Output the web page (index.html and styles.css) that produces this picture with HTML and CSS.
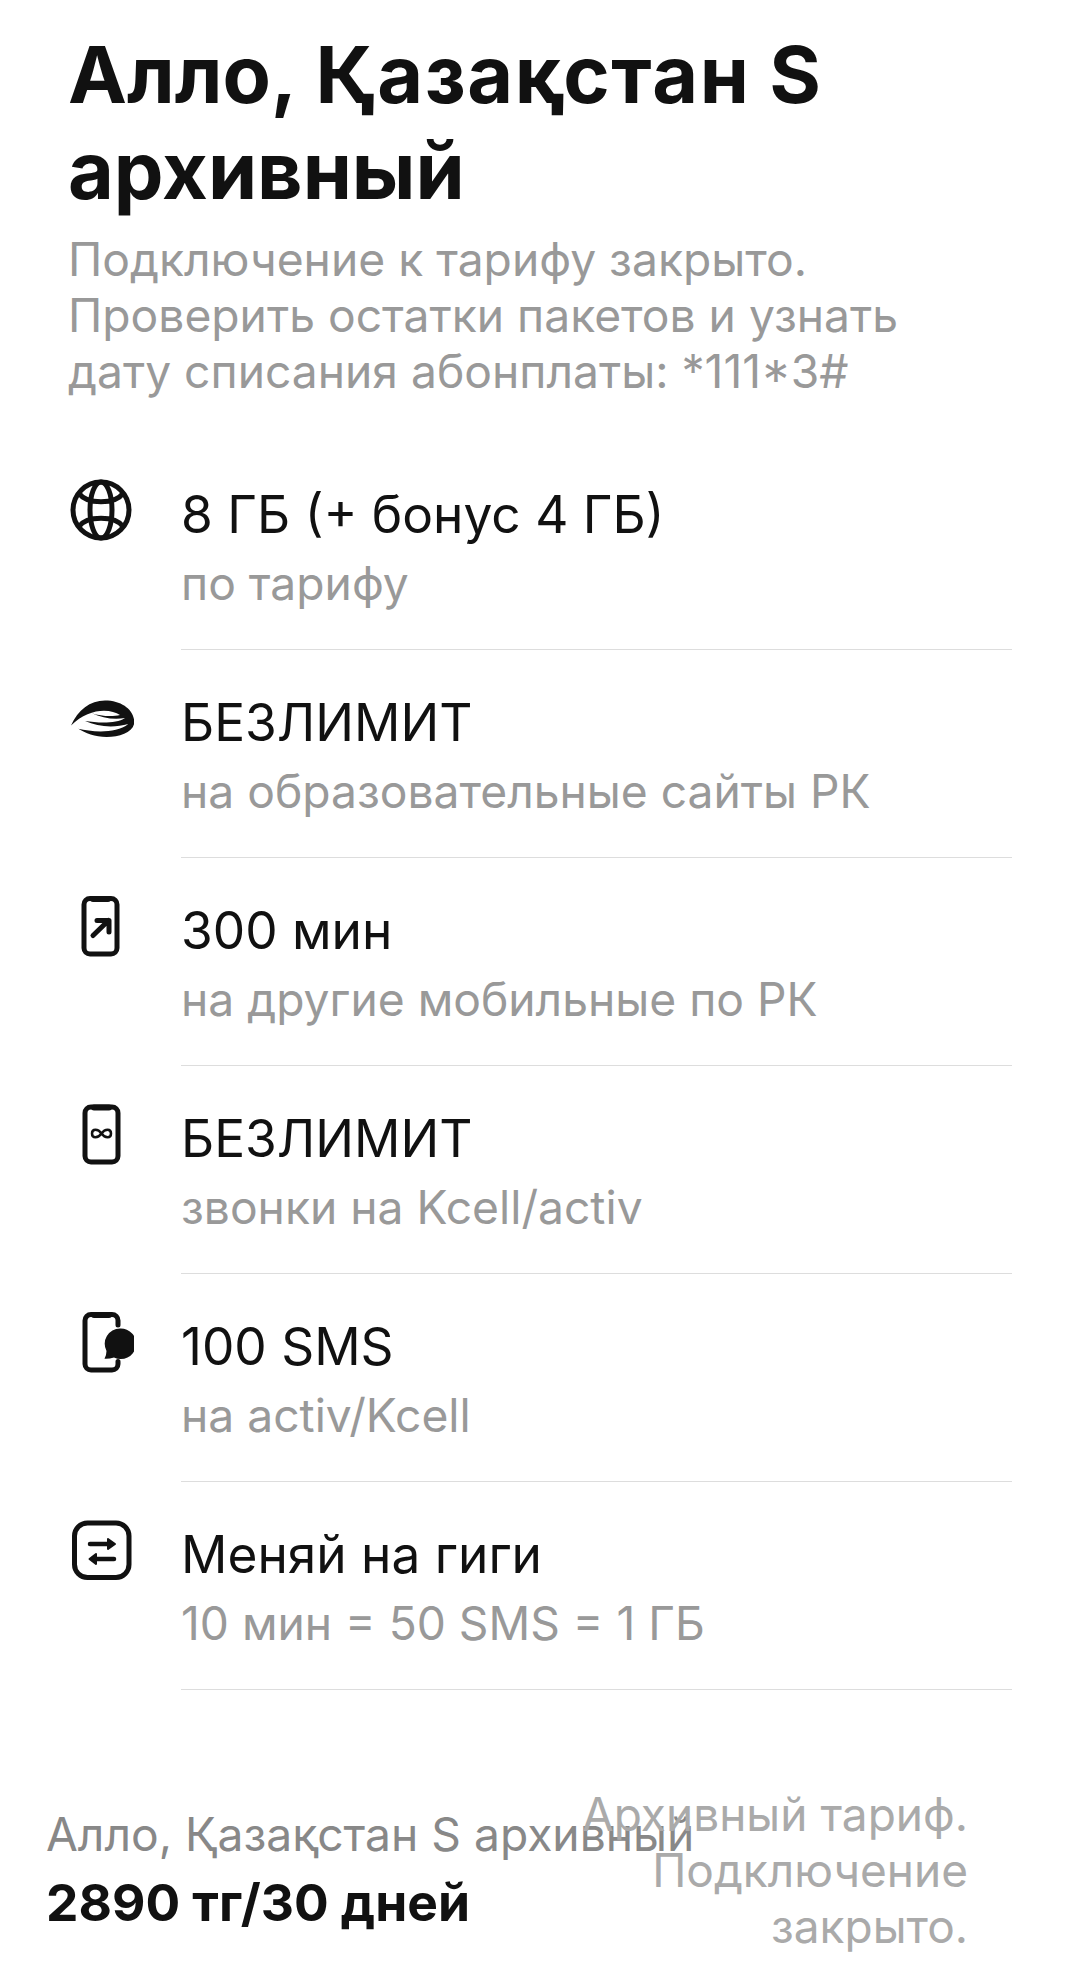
FILE: index.html
```html
<!DOCTYPE html>
<html lang="ru">
<head>
    <meta charset="UTF-8">
    <meta name="viewport" content="width=device-width, initial-scale=1.0">
    <title>Алло, Қазақстан S архивный</title>
    <link rel="stylesheet" href="styles.css">
</head>
<body>
    <div class="page">
        <h1 class="title">Алло, <span class="wide">Қазақстан</span> S<br>архивный</h1>
        <p class="subtitle">Подключение к тарифу закрыто.<br>Проверить остатки пакетов и узнать<br>дату списания абонплаты: *111*3#</p>

        <div class="list">
            <div class="item">
                <div class="icon">
                    <svg width="64" height="64" viewBox="0 0 64 64" fill="none" stroke="#111" stroke-width="5">
                        <circle cx="31" cy="32" r="28"/>
                        <ellipse cx="31" cy="32" rx="11" ry="28"/>
                        <path d="M9 15.500 C17 26.500 45 26.500 53 15.500"/>
                        <path d="M9 48.500 C17 37.500 45 37.500 53 48.500"/>
                    </svg>
                </div>
                <div class="text">
                    <div class="name">8 ГБ (+ бонус 4 ГБ)</div>
                    <div class="desc">по тарифу</div>
                </div>
            </div>
            <div class="item">
                <div class="icon">
                    <svg width="64" height="64" viewBox="0 0 64 64" fill="#111">
                        <path d="M1 39.500 C8 24 20 14.500 35 14.500 C52 14.500 64 24 64.300 36 C64 46 50 51 36.700 51 C25 51 15 47 8.300 42.800 C22 46 46 48 58.300 38 C44 42 28 41 15 35 C28 37 46 38 55 32 C44 34 32 32 21.700 27.200 C30 30 42 31 50 29 C40 22 18 22 1 39.500 Z"/>
                    </svg>
                </div>
                <div class="text">
                    <div class="name">БЕЗЛИМИТ</div>
                    <div class="desc">на образовательные сайты РК</div>
                </div>
            </div>
            <div class="item">
                <div class="icon">
                    <svg width="64" height="64" viewBox="0 0 64 64" fill="none" stroke="#111" stroke-width="5" stroke-linecap="round" stroke-linejoin="round">
                        <rect x="14" y="4.500" width="33" height="55.500" rx="6"/>
                        <path d="M23 5 H38" stroke-width="6"/>
                        <path d="M23 41.500 L38.500 26.500 M27 26.500 H39 V38"/>
                    </svg>
                </div>
                <div class="text">
                    <div class="name">300 мин</div>
                    <div class="desc">на другие мобильные по РК</div>
                </div>
            </div>
            <div class="item">
                <div class="icon">
                    <svg width="64" height="64" viewBox="0 0 64 64" fill="none" stroke="#111" stroke-width="5" stroke-linejoin="round">
                        <rect x="15" y="5" width="33" height="55" rx="6"/>
                        <path d="M24 5.500 H39" stroke-width="6" stroke-linecap="round"/>
                        <path d="M31.500 31.500 C28 26.500 22 26.500 22 31.500 C22 36.500 28 36.500 31.500 31.500 C35 26.500 41 26.500 41 31.500 C41 36.500 35 36.500 31.500 31.500 Z" stroke-width="2.500"/>
                    </svg>
                </div>
                <div class="text">
                    <div class="name">БЕЗЛИМИТ</div>
                    <div class="desc">звонки на Kcell/activ</div>
                </div>
            </div>
            <div class="item">
                <div class="icon">
                    <svg width="64" height="64" viewBox="0 0 64 64" fill="none" stroke="#111" stroke-width="5" stroke-linecap="round">
                        <path d="M48 15 V10.500 A6 6 0 0 0 42 4.500 H21 A6 6 0 0 0 15 10.500 V54 A6 6 0 0 0 21 60 H42 A6 6 0 0 0 48 54 V51.500"/>
                        <path d="M24 5 H39" stroke-width="6"/>
                        <path d="M50 18.500 A15.300 15.300 0 1 1 44 47.500 Q39 49 34.500 48.700 Q36.500 45 36.500 41 A15.300 15.300 0 0 1 50 18.500 Z" fill="#111" stroke="none"/>
                    </svg>
                </div>
                <div class="text">
                    <div class="name">100 SMS</div>
                    <div class="desc">на activ/Kcell</div>
                </div>
            </div>
            <div class="item">
                <div class="icon">
                    <svg width="64" height="64" viewBox="0 0 64 64" fill="none" stroke="#111" stroke-width="5" stroke-linecap="round">
                        <rect x="4.500" y="5" width="54.500" height="54.500" rx="13"/>
                        <path d="M20 26 H38" stroke-width="4.500"/>
                        <path d="M38 21 L45 26 L38 31 Z" fill="#111" stroke-width="2" stroke-linejoin="round"/>
                        <path d="M26 41 H44" stroke-width="4.500"/>
                        <path d="M26 36 L19.500 41 L26 46 Z" fill="#111" stroke-width="2" stroke-linejoin="round"/>
                    </svg>
                </div>
                <div class="text">
                    <div class="name">Меняй на гиги</div>
                    <div class="desc">10 мин = 50 SMS = 1 ГБ</div>
                </div>
            </div>
        </div>

        <div class="footer">
            <div class="price">
                <div class="price-name">Алло, Қазақстан S архивный</div>
                <div class="price-value">2890 тг/30 дней</div>
            </div>
            <div class="closed">Архивный тариф. Подключение закрыто.</div>
        </div>
    </div>
</body>
</html>
```

FILE: styles.css
```css
body {
 margin: 0;
 background-color: #fff;
 font-family: Inter, "Liberation Sans", sans-serif;
 color: #111;
}

.page {
 height: 1969px;
 overflow: hidden;
 position: relative;
}

.title {
 margin: 26px 0 0 68px;
 font-size: 79px;
 line-height: 96px;
 font-weight: 700;
}

.title .wide {
 margin-left: 2px;
 letter-spacing: 1.600px;
}

.subtitle {
 margin: 13px 0 0 68px;
 font-size: 46.200px;
 line-height: 56.200px;
 color: #999;
}

.list {
 margin: 42.500px 0 0 68px;
 width: 944px;
}

.item {
 display: flex;
 height: 208px;
}

.icon {
 width: 115px;
 flex-shrink: 0;
 padding-top: 36px;
 margin-left: 2px;
 margin-right: -4px;
}

.text {
 flex: 1;
 padding-top: 38.500px;
 border-bottom: 1px solid #ddd;
}

.name {
 font-size: 51.400px;
 line-height: 66px;
}

.desc {
 margin-top: 6px;
 font-size: 46.200px;
 line-height: 60px;
 color: #999;
}

.footer {
 position: absolute;
 left: 46px;
 right: 112px;
 top: 1786px;
 display: flex;
 justify-content: space-between;
}

.price {
 width: 500px;
 padding-top: 20px;
}

.price-name {
 font-size: 46.200px;
 line-height: 56px;
 color: #888;
 white-space: nowrap;
}

.price-value {
 margin-top: 8px;
 font-size: 51.500px;
 line-height: 64px;
 font-weight: 700;
}

.closed {
 width: 400px;
 text-align: right;
 font-size: 46px;
 line-height: 56.200px;
 color: #aaa;
}
```
